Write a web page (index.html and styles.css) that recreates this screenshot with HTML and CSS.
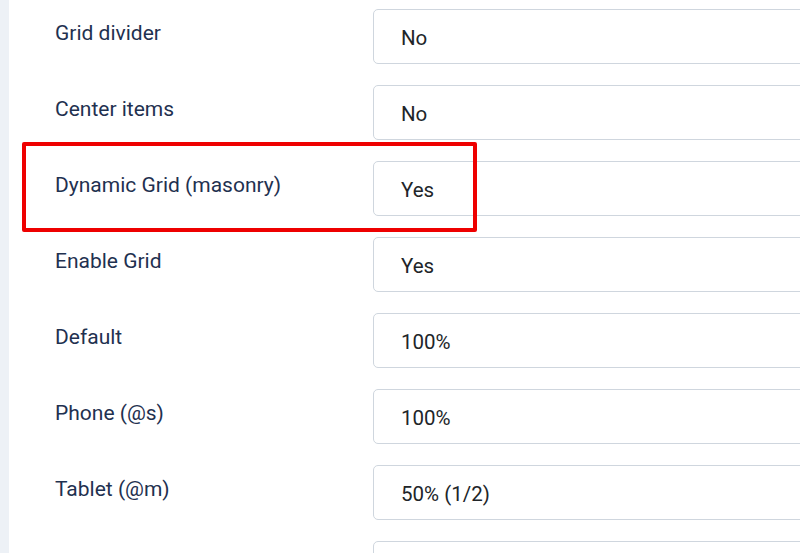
FILE: index.html
```html
<!DOCTYPE html>
<html>
<head>
<meta charset="utf-8">
<link rel="stylesheet" href="styles.css">
</head>
<body>
<div class="page">
  <div class="sidebar"></div>
  <div class="panel">
    <div class="row"><div class="label">Grid divider</div><div class="field">No</div></div>
    <div class="row"><div class="label">Center items</div><div class="field">No</div></div>
    <div class="row highlighted"><div class="label">Dynamic Grid (masonry)</div><div class="field">Yes</div><div class="marker"></div></div>
    <div class="row"><div class="label">Enable Grid</div><div class="field">Yes</div></div>
    <div class="row"><div class="label">Default</div><div class="field">100%</div></div>
    <div class="row"><div class="label">Phone (@s)</div><div class="field">100%</div></div>
    <div class="row"><div class="label">Tablet (@m)</div><div class="field">50% (1/2)</div></div>
    <div class="row"><div class="label"></div><div class="field"></div></div>
  </div>
</div>
</body>
</html>
```
FILE: styles.css
```css
html, body {
  margin: 0;
  padding: 0;
  width: 800px;
  height: 553px;
  overflow: hidden;
  background: #ffffff;
  font-family: Roboto, "Liberation Sans", sans-serif;
}
.page {
  display: flex;
  height: 553px;
}
.sidebar {
  width: 9px;
  flex: none;
  background: #edf1f6;
}
.panel {
  flex: 1;
  background: #ffffff;
  padding: 9px 0 0 46px;
  display: flex;
  flex-direction: column;
  gap: 22px;
  overflow: hidden;
}
.row {
  position: relative;
  display: grid;
  grid-template-columns: 318px 600px;
  height: 54px;
  flex: none;
}
.label {
  padding-top: 12px;
  font-size: 21px;
  line-height: 24px;
  color: #1f3150;
}
.field {
  box-sizing: border-box;
  height: 55px;
  border: 1px solid #cfd6de;
  border-radius: 5px;
  padding: 3px 0 0 27px;
  display: flex;
  align-items: center;
  font-size: 20.5px;
  color: #212529;
}
.marker {
  position: absolute;
  left: -33px;
  top: -19px;
  width: 455px;
  height: 90px;
  box-sizing: border-box;
  border: 4px solid #ee0000;
  border-radius: 2px;
}
```
